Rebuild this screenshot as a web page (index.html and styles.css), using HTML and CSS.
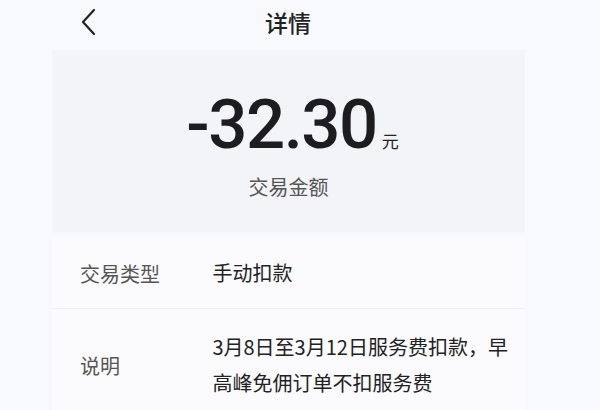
FILE: index.html
```html
<!DOCTYPE html>
<html lang="zh-CN">
<head>
    <meta charset="UTF-8">
    <title>详情</title>
    <link rel="stylesheet" href="styles.css">
</head>
<body>
<div class="page">
    <div class="header">
        <a class="back" href="#">
            <svg width="16" height="28" viewBox="0 0 16 28">
                <polyline points="14,2 3,14 14,26" fill="none" stroke="#222" stroke-width="2.2" stroke-linecap="round" stroke-linejoin="round"/>
            </svg>
        </a>
        <div class="title">详情</div>
    </div>
    <div class="summary">
        <div class="amount">
            <span class="num">-32.30</span>
            <span class="unit">元</span>
        </div>
        <div class="amount-label">交易金额</div>
    </div>
    <div class="list">
        <div class="row">
            <div class="label">交易类型</div>
            <div class="value">手动扣款</div>
        </div>
        <div class="row">
            <div class="label">说明</div>
            <div class="value">3月8日至3月12日服务费扣款，早高峰免佣订单不扣服务费</div>
        </div>
    </div>
</div>
</body>
</html>
```

FILE: styles.css
```css
body {
    font-family: 'Noto Sans CJK SC', 'Noto Sans', sans-serif;
    margin: 0;
    background-color: #f8f9fc;
    color: #222;
    overflow: hidden;
}
.page {
    width: 600px;
    height: 410px;
}
.header {
    height: 44px;
    display: flex;
    align-items: center;
    padding: 0 120px 0 80px;
}
.back {
    display: flex;
    width: 16px;
}
.title {
    flex: 1;
    text-align: center;
    font-size: 23px;
    font-weight: 500;
    color: #222;
}
.summary {
    margin: 6px 75px 0 52px;
    height: 182px;
    background-color: #f3f4f7;
    display: flex;
    flex-direction: column;
    align-items: center;
    padding-top: 40px;
    box-sizing: border-box;
}
.amount {
    display: flex;
    align-items: baseline;
    margin-left: 8px;
}
.amount .num {
    font-family: Roboto, 'Liberation Sans', sans-serif;
    font-size: 69px;
    font-weight: 500;
    line-height: 70px;
    color: #1d1d1f;
    letter-spacing: -1.5px;
}
.amount .unit {
    font-size: 17px;
    margin-left: 5px;
    color: #222;
}
.amount-label {
    margin-top: 12px;
    font-size: 20px;
    color: #555;
}
.list {
    margin: 6px 75px 0 52px;
    background-color: #fbfbfe;
}
.row {
    display: flex;
    align-items: center;
    padding: 0 0 0 28px;
    border-bottom: 1px solid #eef0f4;
}
.row:first-child {
    height: 70px;
}
.row:last-child {
    padding-top: 20px;
    padding-bottom: 20px;
}
.label {
    width: 133px;
    font-size: 20px;
    color: #555;
}
.value {
    width: 314px;
    font-size: 20px;
    line-height: 36px;
    color: #222;
}
```
